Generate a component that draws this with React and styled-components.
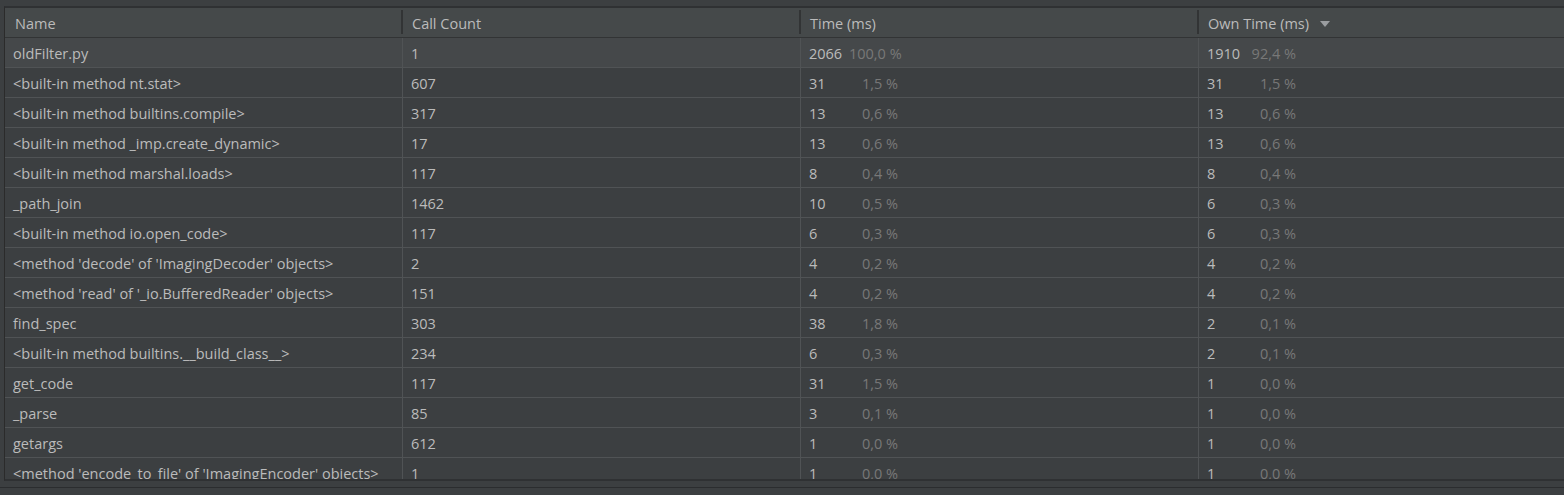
import React from 'react';
import styled, { createGlobalStyle } from 'styled-components';

const GlobalStyle = createGlobalStyle`
  html, body {
    margin: 0;
    padding: 0;
    background: #3c3f41;
    overflow: hidden;
  }
  body {
    font-family: "Open Sans", "Noto Sans", sans-serif;
    font-size: 14.5px;
    color: #bbbbbb;
  }
`;

const COLS = '397px 398px 398px 1fr';

const Page = styled.div`
  width: 1564px;
  height: 495px;
  display: flex;
  flex-direction: column;
  padding-top: 6px;
  padding-left: 4px;
  box-sizing: border-box;
`;

const TableFrame = styled.div`
  height: 475px;
  border-top: 2px solid #2f3133;
  border-left: 1px solid #2b2b2b;
  border-bottom: 2px solid #2f3133;
  overflow: hidden;
  box-sizing: border-box;
`;

const HeaderRow = styled.div`
  display: grid;
  grid-template-columns: ${COLS};
  height: 30px;
  background: #45494a;
  border-bottom: 1px solid #323435;
  box-sizing: border-box;
`;

const HeaderCell = styled.div`
  display: flex;
  align-items: center;
  padding: 1px 0 0 10px;
  position: relative;
  gap: 11px;
  ${(p) => p.$divider && `
    &::before {
      content: '';
      position: absolute;
      left: -1px;
      top: 2px;
      bottom: 3px;
      width: 2px;
      background: #323435;
    }
  `}
`;

const SortArrow = styled.span`
  width: 0;
  height: 0;
  border-left: 5px solid transparent;
  border-right: 5px solid transparent;
  border-top: 6px solid #9a9da0;
  margin-top: 1px;
`;

const Row = styled.div`
  display: grid;
  grid-template-columns: ${COLS};
  height: 30px;
  background: ${(p) => (p.$active ? '#45484a' : '#3c3f41')};
  border-bottom: 1px solid #505355;
  box-sizing: border-box;
`;

const Cell = styled.div`
  display: flex;
  align-items: center;
  padding: 1px 0 0 8px;
  white-space: nowrap;
  overflow: hidden;
  ${(p) => p.$divider && 'border-left: 1px solid #505355;'}
`;

const Value = styled.span`
  width: 40px;
  flex-shrink: 0;
`;

const Percent = styled.span`
  width: 49px;
  text-align: right;
  color: #787878;
  flex-shrink: 0;
`;

const BottomBar = styled.div`
  flex: 1;
  margin-left: -4px;
  margin-top: 6px;
  border-top: 1px solid #2b2d2f;
`;

const data = [
  ['oldFilter.py', 1, 2066, '100,0 %', 1910, '92,4 %'],
  ['<built-in method nt.stat>', 607, 31, '1,5 %', 31, '1,5 %'],
  ['<built-in method builtins.compile>', 317, 13, '0,6 %', 13, '0,6 %'],
  ['<built-in method _imp.create_dynamic>', 17, 13, '0,6 %', 13, '0,6 %'],
  ['<built-in method marshal.loads>', 117, 8, '0,4 %', 8, '0,4 %'],
  ['_path_join', 1462, 10, '0,5 %', 6, '0,3 %'],
  ['<built-in method io.open_code>', 117, 6, '0,3 %', 6, '0,3 %'],
  ["<method 'decode' of 'ImagingDecoder' objects>", 2, 4, '0,2 %', 4, '0,2 %'],
  ["<method 'read' of '_io.BufferedReader' objects>", 151, 4, '0,2 %', 4, '0,2 %'],
  ['find_spec', 303, 38, '1,8 %', 2, '0,1 %'],
  ['<built-in method builtins.__build_class__>', 234, 6, '0,3 %', 2, '0,1 %'],
  ['get_code', 117, 31, '1,5 %', 1, '0,0 %'],
  ['_parse', 85, 3, '0,1 %', 1, '0,0 %'],
  ['getargs', 612, 1, '0,0 %', 1, '0,0 %'],
  ["<method 'encode_to_file' of 'ImagingEncoder' objects>", 1, 1, '0,0 %', 1, '0,0 %'],
];

const App = () => {
  return (
    <>
      <GlobalStyle />
      <Page>
        <TableFrame>
          <HeaderRow>
            <HeaderCell>Name</HeaderCell>
            <HeaderCell $divider>Call Count</HeaderCell>
            <HeaderCell $divider>Time (ms)</HeaderCell>
            <HeaderCell $divider>
              Own Time (ms)
              <SortArrow />
            </HeaderCell>
          </HeaderRow>
          {data.map(([name, calls, time, timePct, own, ownPct], i) => (
            <Row key={name} $active={i === 0}>
              <Cell>{name}</Cell>
              <Cell $divider>{calls}</Cell>
              <Cell $divider>
                <Value>{time}</Value>
                <Percent>{timePct}</Percent>
              </Cell>
              <Cell $divider>
                <Value>{own}</Value>
                <Percent>{ownPct}</Percent>
              </Cell>
            </Row>
          ))}
        </TableFrame>
        <BottomBar />
      </Page>
    </>
  );
};

export default App;
